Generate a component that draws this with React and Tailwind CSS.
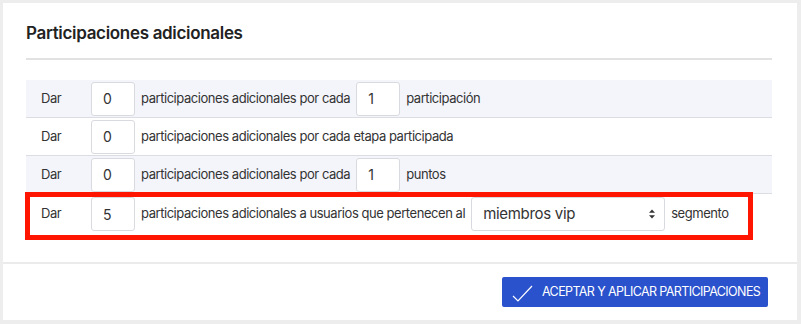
import React from "react";

function Box({ v }) {
  return (
    <div className="w-[44px] h-[34px] shrink-0 border border-[#d9dadf] rounded-[3px] bg-white flex items-center pl-[11px] text-[14px] text-[#333]">
      {v}
    </div>
  );
}

function Row({ shaded, children, last }) {
  return (
    <div
      className={
        "h-[38px] flex items-center gap-[6px] pl-[15px] text-[13px] tracking-[-0.45px] whitespace-nowrap text-[#333] " +
        (shaded ? "bg-[#f4f5fb] " : "bg-white ") +
        (last ? "" : "border-b border-[#dcdde3]")
      }
    >
      {children}
    </div>
  );
}

export default function App() {
  return (
    <div
      className="w-[801px] h-[324px] bg-[#ededed] pt-[3px] pl-[3px] pr-[4px] pb-[4px]"
      style={{ fontFamily: "Inter, 'Noto Sans', sans-serif" }}
    >
      <div className="bg-white h-full flex flex-col">
        <div className="pl-[23px] pr-[25px] relative">
          <div className="h-[57px] flex items-center pt-[6px] border-b-2 border-[#e2e2e2]">
            <h2 className="text-[17px] font-semibold text-[#222] tracking-[-0.32px]">Participaciones adicionales</h2>
          </div>
          <div className="mt-[20px]">
            <Row shaded>
              <span className="w-[44px]">Dar</span>
              <Box v="0" />
              <span>participaciones adicionales por cada</span>
              <Box v="1" />
              <span>participación</span>
            </Row>
            <Row>
              <span className="w-[44px]">Dar</span>
              <Box v="0" />
              <span>participaciones adicionales por cada etapa participada</span>
            </Row>
            <Row shaded>
              <span className="w-[44px]">Dar</span>
              <Box v="0" />
              <span>participaciones adicionales por cada</span>
              <Box v="1" />
              <span>puntos</span>
            </Row>
            <div className="h-[40px] flex items-center gap-[6px] pl-[15px] text-[13px] tracking-[-0.45px] whitespace-nowrap text-[#333] bg-white">
              <span className="w-[44px]">Dar</span>
              <Box v="5" />
              <span>participaciones adicionales a usuarios que pertenecen al</span>
              <div className="w-[194px] h-[34px] shrink-0 border border-[#d9dadf] rounded-[3px] bg-white flex items-center justify-between pl-[11px] pr-[8px] text-[15px] tracking-[-0.3px] text-[#333]">
                <span>miembros vip</span>
                <svg width="8" height="12" viewBox="0 0 8 12">
                  <path d="M4 1.5 L7 4.8 H1 Z" fill="#333" />
                  <path d="M4 10.5 L7 7.2 H1 Z" fill="#333" />
                </svg>
              </div>
              <span>segmento</span>
            </div>
          </div>
          <div className="absolute left-[22px] top-[189px] w-[728px] h-[48px] border-[5px] border-[#ff1500] pointer-events-none" />
        </div>
        <div className="mt-auto h-[58px] border-t-2 border-[#ebebeb] flex items-center justify-end pr-[29px]">
          <button className="h-[30px] w-[266px] bg-[#2a52cc] rounded-[2px] flex items-center pl-[10px] gap-[8px] text-white text-[12.5px] tracking-[-0.6px] whitespace-nowrap">
            <svg width="22" height="22" viewBox="0 0 22 22" className="shrink-0">
              <path d="M1 15 L6 20 L20 5" fill="none" stroke="white" strokeWidth="1.2" />
            </svg>
            <span>ACEPTAR Y APLICAR PARTICIPACIONES</span>
          </button>
        </div>
      </div>
    </div>
  );
}
